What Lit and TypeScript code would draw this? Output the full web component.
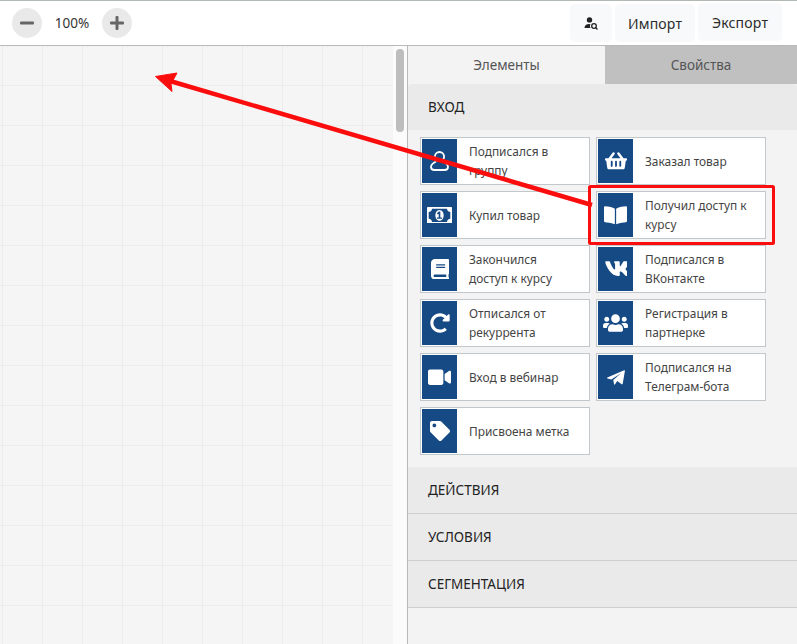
import { LitElement, html, css, svg } from "lit";
import { customElement } from "lit/decorators.js";

type Ico = { vb: string; d: string; w: number };
const I: Record<string, Ico> = {
  basket: { vb: "0 0 576 512", w: 22, d: "M576 216v16c0 13.255-10.745 24-24 24h-8l-26.113 182.788C514.509 462.435 494.257 480 470.37 480H105.63c-23.887 0-44.139-17.565-47.518-41.212L32 256h-8c-13.255 0-24-10.745-24-24v-16c0-13.255 10.745-24 24-24h67.341l106.78-146.821c10.395-14.292 30.407-17.453 44.701-7.058 14.293 10.395 17.453 30.408 7.058 44.701L170.477 192h235.046L326.12 82.821c-10.395-14.292-7.234-34.306 7.059-44.701 14.291-10.395 34.306-7.235 44.701 7.058L484.659 192H552c13.255 0 24 10.745 24 24zM312 392V280c0-13.255-10.745-24-24-24s-24 10.745-24 24v112c0 13.255 10.745 24 24 24s24-10.745 24-24zm112 0V280c0-13.255-10.745-24-24-24s-24 10.745-24 24v112c0 13.255 10.745 24 24 24s24-10.745 24-24zm-224 0V280c0-13.255-10.745-24-24-24s-24 10.745-24 24v112c0 13.255 10.745 24 24 24s24-10.745 24-24z" },
  bookOpen: { vb: "0 0 576 512", w: 23, d: "M542.22 32.05c-54.8 3.11-163.72 14.43-230.96 55.59-4.64 2.84-7.27 7.89-7.27 13.17v363.87c0 11.55 12.63 18.85 23.28 13.49 69.18-34.82 169.23-44.32 218.7-46.92 16.89-.89 30.02-14.43 30.02-30.66V62.75c.01-17.71-15.35-31.74-33.77-30.7zM264.73 87.64C197.5 46.48 88.58 35.17 33.78 32.05 15.36 31.01 0 45.04 0 62.75V400.6c0 16.24 13.13 29.78 30.02 30.66 49.49 2.6 149.59 12.11 218.77 46.95 10.62 5.35 23.21-1.94 23.21-13.46V100.63c0-5.29-2.62-10.14-7.27-12.99z" },
  video: { vb: "0 0 576 512", w: 23, d: "M336.2 64H47.8C21.4 64 0 85.4 0 111.8v288.4C0 426.6 21.4 448 47.8 448h288.4c26.4 0 47.8-21.4 47.8-47.8V111.8c0-26.4-21.4-47.8-47.8-47.8zm189.4 37.7L416 177.3v157.4l109.6 75.5c21.2 14.6 50.4-.3 50.4-25.8V127.5c0-25.4-29.1-40.4-50.4-25.8z" },
  tag: { vb: "0 0 512 512", w: 20, d: "M0 252.118V48C0 21.49 21.49 0 48 0h204.118a48 48 0 0 1 33.941 14.059l211.882 211.882c18.745 18.745 18.745 49.137 0 67.882L293.823 497.941c-18.745 18.745-49.137 18.745-67.882 0L14.059 286.059A48 48 0 0 1 0 252.118zM112 64c-26.51 0-48 21.49-48 48s21.49 48 48 48 48-21.49 48-48-21.49-48-48-48z" },
  plane: { vb: "0 0 18 15", w: 18, d: "M0.3 7.600 L17.200 0.300 Q18 0 17.900 1 L15.700 13.800 Q15.500 14.600 14.700 14.200 L10.200 11 L7.900 14.500 Q7.200 15 7 14 L6.300 9.900 L14 3.200 L4.300 9.400 L0.400 8.400 Q-0.200 8 0.300 7.600 Z" },
  users: { vb: "0 0 640 512", w: 25, d: "M96 224c35.3 0 64-28.7 64-64s-28.7-64-64-64-64 28.7-64 64 28.7 64 64 64zm448 0c35.3 0 64-28.7 64-64s-28.7-64-64-64-64 28.7-64 64 28.7 64 64 64zm32 32h-64c-17.6 0-33.5 7.1-45.1 18.6 40.3 22.1 68.9 62 75.1 109.4h66c17.7 0 32-14.3 32-32v-32c0-35.3-28.7-64-64-64zm-256 0c61.9 0 112-50.1 112-112S381.9 32 320 32 208 82.1 208 144s50.1 112 112 112zm76.8 32h-8.3c-20.8 10-43.9 16-68.5 16s-47.6-6-68.5-16h-8.3C179.6 288 128 339.6 128 403.2V432c0 26.5 21.5 48 48 48h288c26.5 0 48-21.5 48-48v-28.8c0-63.6-51.6-115.2-115.2-115.2zm-223.7-13.4C161.5 263.1 145.6 256 128 256H64c-35.3 0-64 28.7-64 64v32c0 17.7 14.3 32 32 32h65.9c6.3-47.4 34.9-87.3 75.2-109.4z" },
  vk: { vb: "50 90 480 330", w: 22, d: "M545 117.7c3.7-12.5 0-21.7-17.8-21.7h-58.9c-15 0-21.9 7.9-25.6 16.7-5.3 13.1-23.6 48.4-49.2 80.1-8.3 8.3-12 10.9-16.500 10.9-2.200 0-5.600-2.600-5.600-15.100V117.700c0-15-4.200-21.700-16.600-21.700h-92.600c-9.400 0-15 7-15 13.500 0 14.200 21.200 17.500 23.400 57.500v86.800c0 19-3.400 22.500-10.900 22.500-20 0-68.600-73.400-97.400-157.400-5.800-16.300-11.500-22.900-26.600-22.900H77c-16.800 0-20.200 7.900-20.200 16.700 0 15.600 20 93.100 93.100 195.500C198.700 377.700 267.400 416 330 416c37.500 0 42.100-8.400 42.100-22.900 0-66.800-3.400-73.100 15.400-73.100 8.700 0 23.700 4.400 58.700 38.100 40 40 46.600 57.900 69 57.900h58.900c16.800 0 25.300-8.400 20.400-25-11.200-34.900-86.900-106.700-90.300-111.500-8.700-11.200-6.200-16.200 0-26.200.1-.1 72-101.300 79.400-135.600z" },
  book: { vb: "0 0 448 512", w: 18, d: "M448 360V24c0-13.300-10.700-24-24-24H96C43 0 0 43 0 96v320c0 53 43 96 96 96h328c13.300 0 24-10.700 24-24v-16c0-7.500-3.500-14.300-8.900-18.700-4.200-15.400-4.200-59.300 0-74.700 5.400-4.300 8.900-11.100 8.900-18.600zM128 134c0-3.300 2.700-6 6-6h212c3.300 0 6 2.700 6 6v20c0 3.300-2.700 6-6 6H134c-3.300 0-6-2.700-6-6v-20zm0 64c0-3.300 2.700-6 6-6h212c3.300 0 6 2.700 6 6v20c0 3.300-2.700 6-6 6H134c-3.300 0-6-2.700-6-6v-20zm253.400 250H96c-17.700 0-32-14.300-32-32 0-17.600 14.400-32 32-32h285.400c-1.900 17.100-1.900 46.900 0 64z" },
  money: { vb: "0 256 1920 1280", w: 25, d: "M768 1152h384v-96h-128v-448h-114l-148 137 77 80q42-37 55-57h2v288h-128v96zm512-256q0 70-21 142t-59.500 134-101.500 101-138 39-138-39-101.500-101-59.500-134-21-142 21-142 59.500-134 101.500-101 138-39 138 39 101.500 101 59.500 134 21 142zm512 256v-512q-106 0-181-75t-75-181h-1152q0 106-75 181t-181 75v512q106 0 181 75t75 181h1152q0-106 75-181t181-75zm128-832v1152q0 26-19 45t-45 19h-1792q-26 0-45-19t-19-45v-1152q0-26 19-45t45-19h1792q26 0 45 19t19 45z" },
  redo: { vb: "0 0 512 512", w: 20, d: "M256.455 8c66.269.119 126.437 26.233 170.859 68.685l35.715-35.715C478.149 25.851 504 36.559 504 57.941V192c0 13.255-10.745 24-24 24H345.941c-21.382 0-32.09-25.851-16.971-40.971l41.75-41.75c-30.864-28.899-70.801-44.907-113.23-45.273-92.398-.798-170.283 73.977-169.484 169.442C88.764 348.009 162.184 424 256 424c41.127 0 79.997-14.678 110.629-41.556 4.743-4.161 11.906-3.908 16.368.553l39.662 39.662c4.872 4.872 4.631 12.815-.482 17.433C378.202 479.813 319.926 504 256 504 119.034 504 8.001 392.967 8 256.002 7.999 119.193 119.646 7.755 256.455 8z" },
};

const icon = (k: string) => {
  if (k === "user") {
    return html`<svg width="19" height="20" viewBox="0 0 19 20" fill="none" stroke="#fff" stroke-width="1.800">
      <circle cx="9.500" cy="5.600" r="4.600"></circle>
      <path d="M6 10.500 C3 12 1 13.500 1 16 C1 18 2.500 19 4.500 19 H14.500 C16.500 19 18 18 18 16 C18 13.500 16 12 13 10.500"></path>
    </svg>`;
  }
  const i = I[k];
  return html`<svg width=${i.w} viewBox=${i.vb} fill="#fff">${svg`<path d=${i.d}></path>`}</svg>`;
};

const cards: [string, string][] = [
  ["user", "Подписался в группу"],
  ["basket", "Заказал товар"],
  ["money", "Купил товар"],
  ["bookOpen", "Получил доступ к курсу"],
  ["book", "Закончился доступ к курсу"],
  ["vk", "Подписался в ВКонтакте"],
  ["redo", "Отписался от рекуррента"],
  ["users", "Регистрация в партнерке"],
  ["video", "Вход в вебинар"],
  ["plane", "Подписался на Телеграм-бота"],
  ["tag", "Присвоена метка"],
];

@customElement("app-root")
export class AppRoot extends LitElement {
  static styles = css`
    :host {
      display: block;
      position: relative;
      width: 797px;
      height: 644px;
      overflow: hidden;
      background: #f3f3f3;
      font-family: "Noto Sans", "Open Sans", sans-serif;
      color: #333;
    }
    .top {
      box-sizing: border-box;
      height: 46px;
      background: #fff;
      border-top: 1px solid #b1b9b5;
      border-bottom: 1px solid #b9b9b9;
      display: flex;
      align-items: center;
      padding: 0 15px 0 12px;
    }
    .round {
      width: 30px;
      height: 30px;
      border-radius: 50%;
      background: #e9e9e9;
      display: flex;
      align-items: center;
      justify-content: center;
    }
    .pct {
      width: 60px;
      text-align: center;
      font-size: 13.500px;
      color: #333;
    }
    .spacer { flex: 1; }
    .btn {
      box-sizing: border-box;
      height: 38px;
      margin-left: 3px;
      background: #f8f9fa;
      border-radius: 5px;
      display: flex;
      align-items: center;
      justify-content: center;
      font-size: 14px;
      color: #2b2b2b;
      letter-spacing: 0.2px;
    }
    .b1 { width: 42px; margin-left: 0; }
    .b2 { width: 80px; }
    .b3 { width: 84px; margin-bottom: 2px; }
    .main {
      display: flex;
      height: 598px;
    }
    .canvas {
      width: 393px;
      background-color: #f5f5f5;
      background-image:
        linear-gradient(#ececec 1px, transparent 1px),
        linear-gradient(90deg, #ececec 1px, transparent 1px);
      background-size: 40px 40px;
      background-position: 2px -1px;
    }
    .track {
      width: 14px;
      background: #fbfbfb;
      display: flex;
      justify-content: center;
      padding-top: 3px;
      box-sizing: border-box;
    }
    .thumb {
      width: 8px;
      height: 83px;
      border-radius: 4px;
      background: #bdbdbd;
    }
    .side {
      flex: 1;
      border-left: 1px solid #b9b9b9;
      background: #f3f3f3;
      min-width: 0;
    }
    .tabs {
      display: flex;
      height: 38px;
    }
    .tab {
      display: flex;
      align-items: center;
      justify-content: center;
      font-size: 13.500px;
      color: #555;
    }
    .t1 { width: 197px; background: #f3f3f3; }
    .t2 { flex: 1; background: #c0c0c0; }
    .head {
      box-sizing: border-box;
      height: 46px;
      background: #eaeaea;
      padding: 0 20px;
      display: flex;
      align-items: center;
      font-size: 13.500px;
      color: #222;
    }
    .head.line {
      height: 47px;
      border-bottom: 1px solid #cfcfcf;
    }
    .head.first { border-radius: 4px 4px 0 0; }
    .grid {
      display: grid;
      grid-template-columns: 170px 170px;
      grid-auto-rows: 48px;
      gap: 6px;
      padding: 7px 12px 12px;
    }
    .card {
      box-sizing: border-box;
      border: 1px solid #c2c7cb;
      background: #fff;
      padding: 1px;
      display: flex;
      align-items: center;
    }
    .ico {
      width: 35px;
      height: 100%;
      flex: none;
      background: #154a84;
      display: flex;
      align-items: center;
      justify-content: center;
    }
    .txt {
      margin: 0 12px;
      font-size: 11.900px;
      line-height: 19px;
      color: #444;
    }
    .overlay {
      position: absolute;
      left: 0;
      top: 0;
      pointer-events: none;
    }
  `;

  render() {
    return html`
      <div class="top">
        <div class="round">
          <svg width="14" height="14" viewBox="0 0 14 14"><rect x="0" y="5.500" width="14" height="3" rx="1" fill="#666"></rect></svg>
        </div>
        <div class="pct">100%</div>
        <div class="round">
          <svg width="14" height="14" viewBox="0 0 14 14"><path d="M5.500 1 a1 1 0 0 1 1 -1 h1 a1 1 0 0 1 1 1 V5.500 H13 a1 1 0 0 1 1 1 v1 a1 1 0 0 1 -1 1 H8.500 V13 a1 1 0 0 1 -1 1 h-1 a1 1 0 0 1 -1 -1 V8.500 H1 a1 1 0 0 1 -1 -1 v-1 a1 1 0 0 1 1 -1 H5.500 Z" fill="#666"></path></svg>
        </div>
        <div class="spacer"></div>
        <div class="btn b1">
          <svg width="14" height="13" viewBox="0 0 14 13" fill="#222">
            <circle cx="5.500" cy="2.900" r="2.700"></circle>
            <path d="M0.500 11 C0.500 8.500 2.500 7 5 7 L6.500 7.300 C5.500 9 6 10.500 6.800 11 Z"></path>
            <circle cx="10" cy="9" r="2.300" fill="none" stroke="#222" stroke-width="1.300"></circle>
            <path d="M11.600 10.600 L13.500 12.500" stroke="#222" stroke-width="1.300"></path>
          </svg>
        </div>
        <div class="btn b2">Импорт</div>
        <div class="btn b3">Экспорт</div>
      </div>
      <div class="main">
        <div class="canvas"></div>
        <div class="track"><div class="thumb"></div></div>
        <div class="side">
          <div class="tabs">
            <div class="tab t1">Элементы</div>
            <div class="tab t2">Свойства</div>
          </div>
          <div class="head first">ВХОД</div>
          <div class="grid">
            ${cards.map(
              ([k, t]) => html`<div class="card"><div class="ico">${icon(k)}</div><div class="txt">${t}</div></div>`
            )}
          </div>
          <div class="head line">ДЕЙСТВИЯ</div>
          <div class="head line">УСЛОВИЯ</div>
          <div class="head line">СЕГМЕНТАЦИЯ</div>
        </div>
      </div>
      <svg class="overlay" width="797" height="644" viewBox="0 0 797 644" fill="none">
        <rect x="589.500" y="186.500" width="184" height="57" rx="1" stroke="#fb0d0d" stroke-width="3"></rect>
        <path d="M592 205 L170 81" stroke="#fb0d0d" stroke-width="4.500"></path>
        <path d="M155.500 76.500 L177 73 L171 84 L172 91.500 Z" fill="#fb0d0d" stroke="#fb0d0d" stroke-width="1" stroke-linejoin="round"></path>
      </svg>
    `;
  }
}
